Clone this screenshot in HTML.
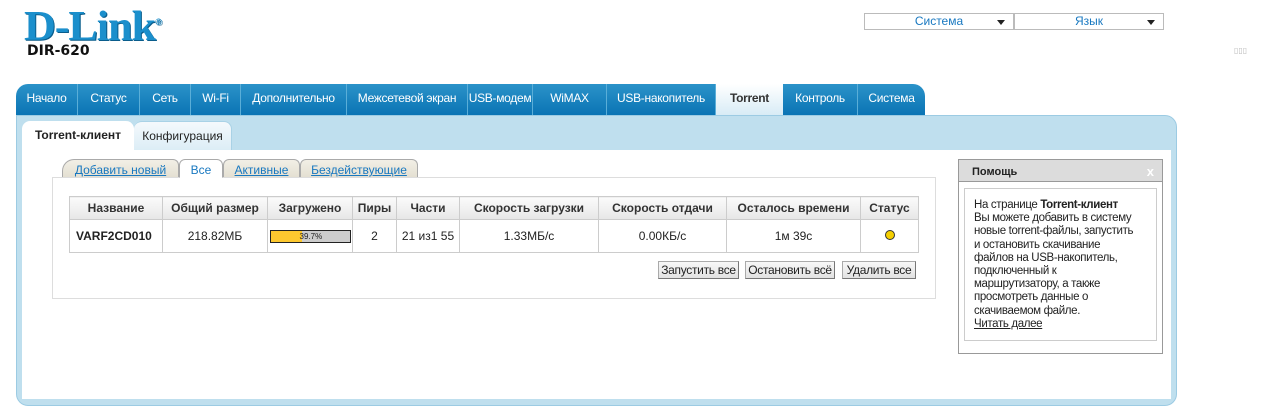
<!DOCTYPE html>
<html><head><meta charset="utf-8"><style>
*{box-sizing:border-box;margin:0;padding:0}
body{width:1261px;height:418px;background:#fff;font-family:"Liberation Sans","DejaVu Sans",sans-serif;font-size:12px;color:#222;position:relative;overflow:hidden}
.abs{position:absolute}
.logo{left:24px;top:3px;font-family:"Liberation Serif",serif;font-weight:bold;font-size:42px;color:#1b8fcc;letter-spacing:-1px;text-shadow:1px 1px 0 #0a5d8c;transform:scaleX(1.05);transform-origin:left}
.model{left:27px;top:43px;font-weight:bold;font-size:14px;color:#111;font-family:"DejaVu Sans",sans-serif}
.dd{top:13px;height:17px;border:1px solid #bbb;color:#1878c0;font-size:12px;text-align:center;line-height:15px}
.dd:after{content:"";position:absolute;right:8px;top:6px;border:4px solid transparent;border-top:5px solid #222;border-bottom:0}
.nav{left:16px;top:84px;width:909px;height:31px;background:linear-gradient(#2b93c9,#0a74b4);border-radius:12px 12px 0 0;display:flex}
.nav div{color:#fff;font-size:12px;line-height:29px;text-align:center;border-right:1px solid #5aaed8;height:31px;white-space:nowrap;overflow:hidden;letter-spacing:-0.3px}
.nav .act{background:linear-gradient(#fff,#d8ecf6);color:#333;font-weight:bold;border-right:none}
.panel{left:16px;top:115px;width:1161px;height:291px;background:#bfdfee;border:1px solid #9ccbe3;border-radius:0 12px 12px 12px}
.inner{left:22px;top:150px;width:1149px;height:249px;background:#fff}
.st{top:121px;height:29px;line-height:28px;font-size:12px;text-align:center;border-radius:8px 8px 0 0}
.itab{top:159px;height:18px;line-height:20px;font-size:12px;text-align:center;color:#1878c0;text-decoration:underline;background:linear-gradient(#f2efe6,#e4e0d2);border:1px solid #aaa;border-bottom:none;border-radius:6px 6px 0 0}
.box{left:52px;top:177px;width:884px;height:122px;border:1px solid #ddd}
table{position:absolute;left:69px;top:196px;border-collapse:collapse;width:850px}
td,th{border:1px solid #ccc;text-align:center;font-size:12px}
th{height:23px;background:linear-gradient(#fbfbfb,#e6e6e6);font-weight:bold;color:#333}
td{height:33px}
.btn{top:261px;height:18px;line-height:16px;font-size:12px;background:linear-gradient(#f8f8f8,#e2e2e2);border:1px solid #aaa;border-right-color:#777;border-bottom-color:#777;text-align:center;letter-spacing:-0.3px;white-space:nowrap}
.help{left:958px;top:159px;width:205px;height:195px;border:1px solid #999;background:#fff}
.hh{height:22px;background:#dcdcdc;border-bottom:1px solid #999;font-weight:bold;font-size:11px;line-height:24px;padding-left:13px}
.hb{position:absolute;left:5px;top:28px;width:193px;height:153px;border:1px solid #ccc;padding:10px 6px 10px 9px;font-size:11.5px;line-height:13.2px;letter-spacing:-0.35px}
</style></head><body>
<div class="abs logo">D-Link<sup style="font-size:9px">®</sup></div>
<div class="abs model">DIR-620</div>
<div class="abs dd" style="left:864px;width:150px">Система</div>
<div class="abs dd" style="left:1014px;width:150px">Язык</div>
<div class="abs" style="left:1234px;top:46px;font-size:8px;color:#bbb">▯▯▯</div>
<div class="abs nav">
<div style="width:62px">Начало</div><div style="width:62px">Статус</div><div style="width:51px">Сеть</div><div style="width:50px">Wi-Fi</div><div style="width:106px">Дополнительно</div><div style="width:121px">Межсетевой экран</div><div style="width:65px">USB&#8209;модем</div><div style="width:74px">WiMAX</div><div style="width:109px">USB-накопитель</div><div class="act" style="width:67px">Torrent</div><div style="width:75px">Контроль</div><div style="width:67px;border:none">Система</div>
</div>
<div class="abs panel"></div>
<div class="abs inner"></div>
<div class="abs st" style="left:22px;width:112px;background:#fff;font-weight:bold">Torrent-клиент</div>
<div class="abs st" style="left:134px;width:98px;background:linear-gradient(#f4f9fc,#dcedf6);border:1px solid #a9d2e6;border-bottom:none;border-left:none">Конфигурация</div>
<div class="abs box"></div>
<div class="abs itab" style="left:62px;width:117px;border-radius:12px 6px 0 0">Добавить новый</div>
<div class="abs itab" style="left:179px;width:44px;background:#fff;text-decoration:none;border-bottom:1px solid #fff;height:19px">Все</div>
<div class="abs itab" style="left:223px;width:77px">Активные</div>
<div class="abs itab" style="left:300px;width:118px">Бездействующие</div>
<table>
<tr><th style="width:93px">Название</th><th style="width:105px">Общий размер</th><th style="width:85px">Загружено</th><th style="width:44px">Пиры</th><th style="width:63px">Части</th><th style="width:139px">Скорость загрузки</th><th style="width:128px">Скорость отдачи</th><th style="width:134px">Осталось времени</th><th>Статус</th></tr>
<tr><td style="font-weight:bold;text-align:left;padding-left:6px">VARF2CD010</td><td>218.82МБ</td><td><div style="margin:0 auto;width:81px;height:13px;border:1px solid #222;background:#ccc;position:relative"><div style="width:31px;height:11px;background:#fdc82f"></div><span style="position:absolute;left:29px;top:0;font-size:8px;line-height:11px">39.7%</span></div></td><td>2</td><td>21 из1 55</td><td>1.33МБ/с</td><td>0.00КБ/с</td><td>1м 39с</td><td><span style="display:inline-block;width:10px;height:10px;border-radius:50%;background:#f5cf00;border:1px solid #333"></span></td></tr>
</table>
<div class="abs btn" style="left:658px;width:81px">Запустить все</div>
<div class="abs btn" style="left:745px;width:90px">Остановить всё</div>
<div class="abs btn" style="left:842px;width:74px">Удалить все</div>
<div class="abs help"><div class="hh">Помощь<span style="float:right;margin-right:8px;color:#fff;font-size:13px">x</span></div>
<div class="hb">На странице <b>Torrent-клиент</b><br>Вы можете добавить в систему<br>новые torrent-файлы, запустить<br>и остановить скачивание<br>файлов на USB-накопитель,<br>подключенный к<br>маршрутизатору, а также<br>просмотреть данные о<br>скачиваемом файле.<br><u>Читать далее</u></div></div>
</body></html>
